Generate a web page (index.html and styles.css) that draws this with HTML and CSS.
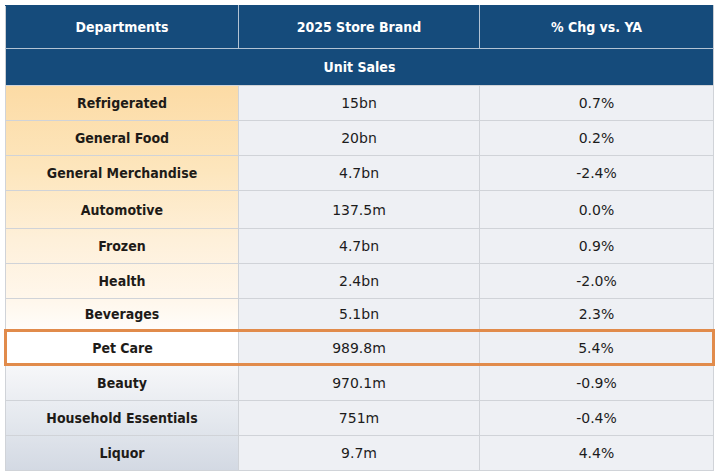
FILE: index.html
```html
<!DOCTYPE html>
<html lang="en">
<head>
<meta charset="utf-8">
<title>Store Brand Unit Sales</title>
<link rel="stylesheet" href="styles.css">
</head>
<body>
<table class="sales">
  <colgroup>
    <col class="c1">
    <col class="c2">
    <col class="c3">
  </colgroup>
  <thead>
    <tr class="head">
      <th>Departments</th>
      <th>2025 Store Brand</th>
      <th>% Chg vs. YA</th>
    </tr>
    <tr class="section">
      <th colspan="3">Unit Sales</th>
    </tr>
  </thead>
  <tbody>
    <tr class="r35"><td class="dept">Refrigerated</td><td>15bn</td><td>0.7%</td></tr>
    <tr class="r35"><td class="dept">General Food</td><td>20bn</td><td>0.2%</td></tr>
    <tr class="r35"><td class="dept">General Merchandise</td><td>4.7bn</td><td>-2.4%</td></tr>
    <tr class="r38"><td class="dept">Automotive</td><td>137.5m</td><td>0.0%</td></tr>
    <tr class="r35"><td class="dept">Frozen</td><td>4.7bn</td><td>0.9%</td></tr>
    <tr class="r35"><td class="dept">Health</td><td>2.4bn</td><td>-2.0%</td></tr>
    <tr class="r31"><td class="dept">Beverages</td><td>5.1bn</td><td>2.3%</td></tr>
    <tr class="highlight"><td class="dept">Pet Care</td><td>989.8m</td><td>5.4%</td></tr>
    <tr class="r35"><td class="dept">Beauty</td><td>970.1m</td><td>-0.9%</td></tr>
    <tr class="r35"><td class="dept">Household Essentials</td><td>751m</td><td>-0.4%</td></tr>
    <tr class="r35"><td class="dept">Liquor</td><td>9.7m</td><td>4.4%</td></tr>
  </tbody>
</table>
</body>
</html>
```

FILE: styles.css
```css
html, body {
  margin: 0;
  padding: 0;
  background: #ffffff;
}

body {
  padding: 5px 4px;
  font-family: "DejaVu Sans", Verdana, sans-serif;
  color: #1c1c1c;
}

.sales {
  width: 708px;
  border-collapse: collapse;
  table-layout: fixed;
  border: 1px solid #c9cdd3;
}

.c1 { width: 233px; }
.c2 { width: 241px; }
.c3 { width: 234px; }

.sales th {
  background: #154b7b;
  color: #ffffff;
  font-family: "DejaVu Sans Condensed", "DejaVu Sans", sans-serif;
  font-weight: bold;
  font-size: 14px;
  text-align: center;
  padding: 0;
}

.head th {
  height: 42px;
  border: 1px solid #b3c3d3;
  border-top-color: #154b7b;
}

.head th:first-child { border-left-color: #c9cdd3; }
.head th:last-child { border-right-color: #c9cdd3; }

.section th {
  height: 36px;
  border-top: 1px solid #b3c3d3;
}

.sales td {
  padding: 0;
  text-align: center;
  font-size: 14px;
  background: #eef0f4;
  border: 1px solid #d0d3d8;
}

.sales td.dept {
  font-family: "DejaVu Sans Condensed", "DejaVu Sans", sans-serif;
  font-weight: bold;
  font-size: 14px;
  color: #1e1b18;
  background: linear-gradient(180deg,
    #fcdba5 86px,
    #fde6bd 170px,
    #fef0da 240px,
    #fff7ec 300px,
    #ffffff 340px,
    #f3f4f7 375px,
    #e4e8ee 420px,
    #d3d9e3 470px) fixed;
}

.r35 td { height: 34px; }
.r38 td { height: 37px; }
.r31 td { height: 30px; }

.highlight td {
  height: 31px;
  border-top: 3px solid #e18b4b;
  border-bottom: 3px solid #e18b4b;
}

.highlight td.dept {
  background: #ffffff;
  border-left: 3px solid #e18b4b;
}

.highlight td:last-child {
  border-right: 3px solid #e18b4b;
}
```
